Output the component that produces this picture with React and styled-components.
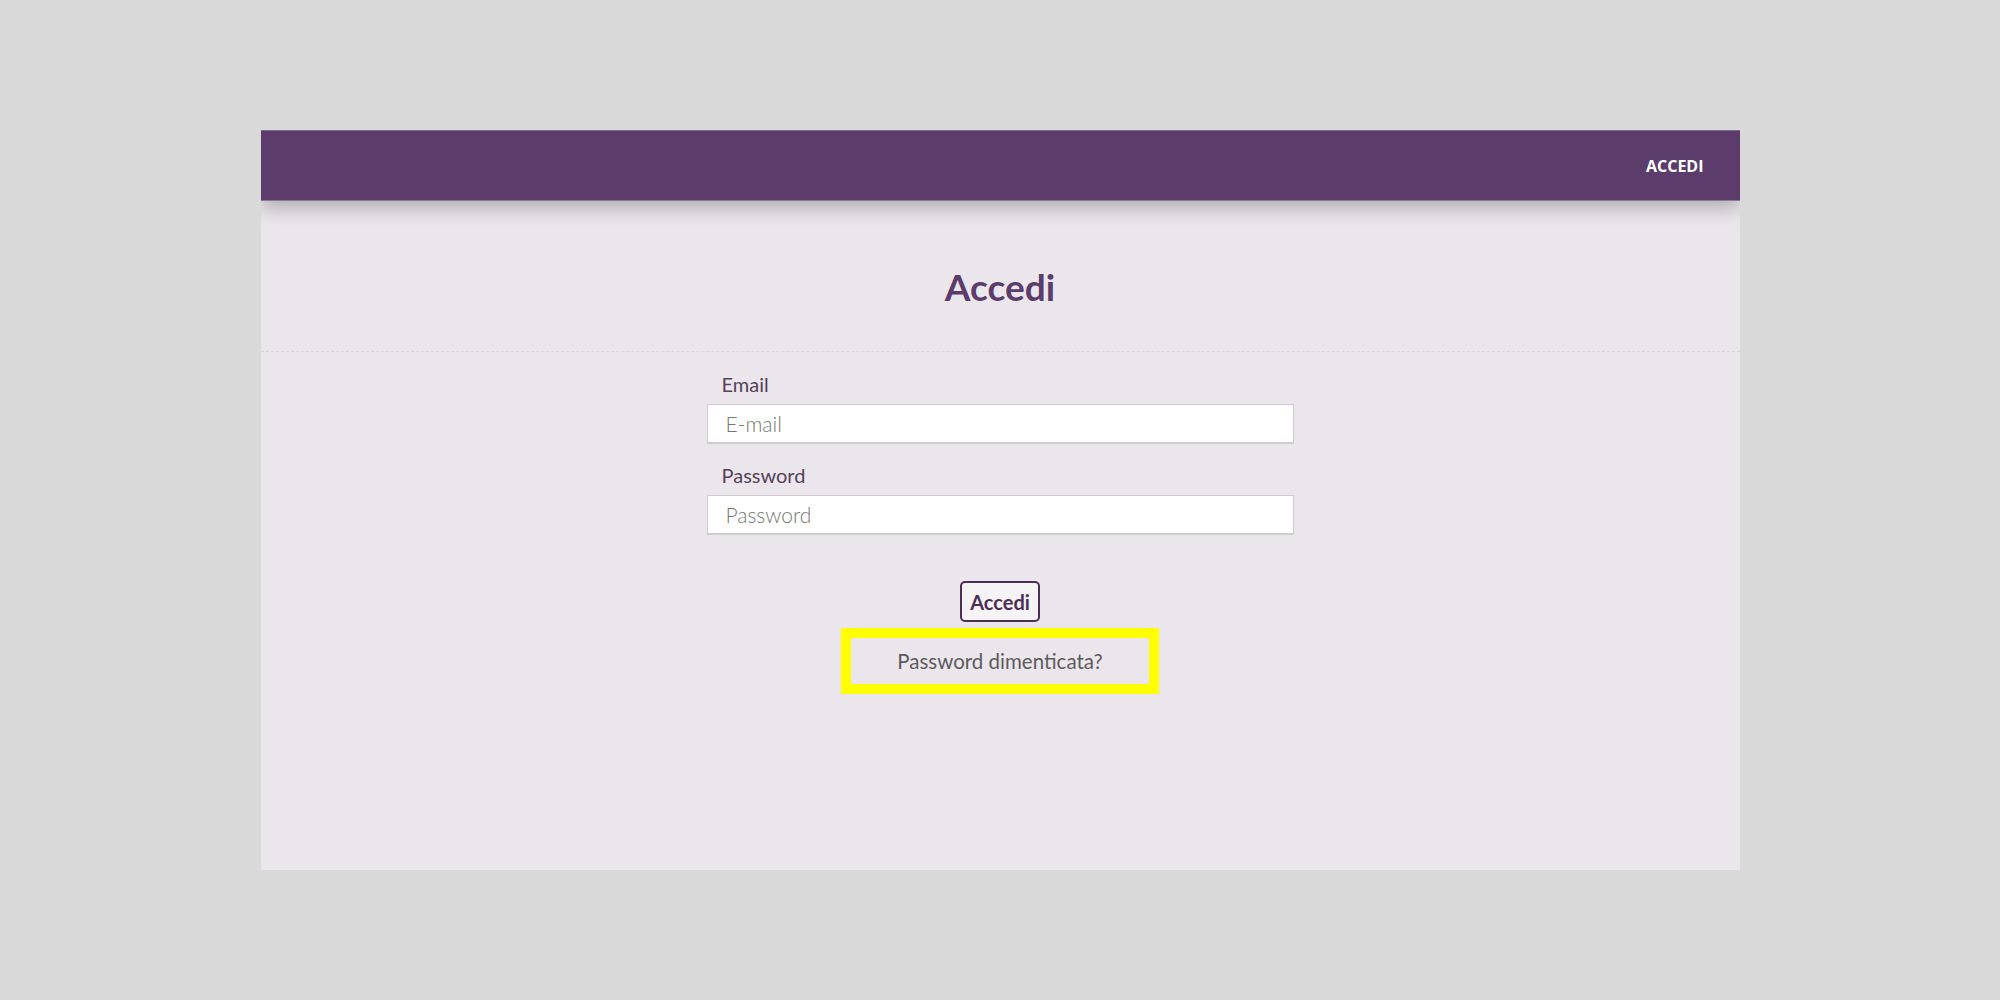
import React, { Component } from "react"
import styled, { createGlobalStyle } from 'styled-components';

const colors = {
  page: '#d9d9d9',
  panel: '#ebe6ec',
  purple: '#5b3c6a',
  label: '#564259',
  muted: '#5c5a5e',
};

const GlobalStyle = createGlobalStyle`
  html, body {
    margin: 0;
    padding: 0;
    background-color: ${colors.page};
    font-family: Lato, "Open Sans", sans-serif;
  }
`;

class App extends Component {
  state = { email: '', password: '' }

  handleEmail = (e) => this.setState({ email: e.target.value })

  handlePassword = (e) => this.setState({ password: e.target.value })

  render = () => {
    const { email, password } = this.state;
    return (
      <Page>
        <GlobalStyle />
        <Panel>
          <NavBar>
            <NavLink>ACCEDI</NavLink>
          </NavBar>
          <TitleSection>
            <Title>Accedi</Title>
          </TitleSection>
          <Form onSubmit={(e) => e.preventDefault()}>
            <Field>
              <Label>Email</Label>
              <Input type="email" placeholder="E-mail" value={email} onChange={this.handleEmail} />
            </Field>
            <Field>
              <Label>Password</Label>
              <Input type="password" placeholder="Password" value={password} onChange={this.handlePassword} />
            </Field>
            <Actions>
              <SubmitButton type="submit">Accedi</SubmitButton>
              <ForgotBox>
                <ForgotLink href="#">Password dimenticata?</ForgotLink>
              </ForgotBox>
            </Actions>
          </Form>
        </Panel>
      </Page>);
  }
}

const Page = styled.div`
  min-height: 1000px;
  padding-top: 130px;
  box-sizing: border-box;
`;

const Panel = styled.div`
  width: 1479px;
  height: 740px;
  margin: 0 auto;
  background-color: ${colors.panel};
  overflow: hidden;
`;

const NavBar = styled.div`
  position: relative;
  z-index: 1;
  height: 71px;
  box-sizing: border-box;
  background-color: ${colors.purple};
  border-top: 1px solid #7e6a88;
  border-bottom: 1px solid #8d7b96;
  display: flex;
  align-items: center;
  justify-content: flex-end;
  padding-right: 36px;
  box-shadow: 0 8px 18px rgba(0, 0, 0, 0.24);
`;

const NavLink = styled.div`
  color: white;
  font-family: "Open Sans", sans-serif;
  font-weight: 700;
  font-size: 16px;
  cursor: pointer;
`;

const TitleSection = styled.div`
  padding: 66px 0 44px;
  border-bottom: 1px dashed #dbd6dc;
  text-align: center;
`;

const Title = styled.h1`
  margin: 0;
  font-size: 37px;
  line-height: 40px;
  font-weight: 700;
  color: ${colors.purple};
`;

const Form = styled.form`
  width: 587px;
  margin: 0 auto;
  padding-top: 21px;
  display: flex;
  flex-direction: column;
`;

const Field = styled.div`
  display: flex;
  flex-direction: column;
  margin-bottom: 20px;
`;

const Label = styled.label`
  font-size: 20px;
  line-height: 22px;
  color: ${colors.label};
  padding-left: 15px;
  margin-bottom: 9px;
`;

const Input = styled.input`
  width: 100%;
  height: 40px;
  box-sizing: border-box;
  border: 1px solid #cfcbd0;
  border-bottom: 2px solid #cfcbd0;
  background: white;
  padding: 0 18px;
  font-family: Lato, sans-serif;
  font-weight: 300;
  font-size: 21px;
  color: #333;
  outline: none;

  ::placeholder {
    color: #a8a6a9;
  }
`;

const Actions = styled.div`
  display: flex;
  flex-direction: column;
  align-items: center;
  margin-top: 26px;
`;

const SubmitButton = styled.button`
  width: 80px;
  height: 41px;
  border: 2px solid #4d2f56;
  border-radius: 5px;
  background-color: #f5f3f6;
  color: #4d2f56;
  font-family: Lato, sans-serif;
  font-weight: 700;
  font-size: 20px;
  cursor: pointer;
  padding: 0;
`;

const ForgotBox = styled.div`
  margin-top: 6px;
  width: 318px;
  height: 66px;
  box-sizing: border-box;
  border: 10px solid #ffff00;
  display: flex;
  align-items: center;
  justify-content: center;
`;

const ForgotLink = styled.a`
  font-size: 20.5px;
  color: ${colors.muted};
  text-decoration: none;
`;

export default App;
